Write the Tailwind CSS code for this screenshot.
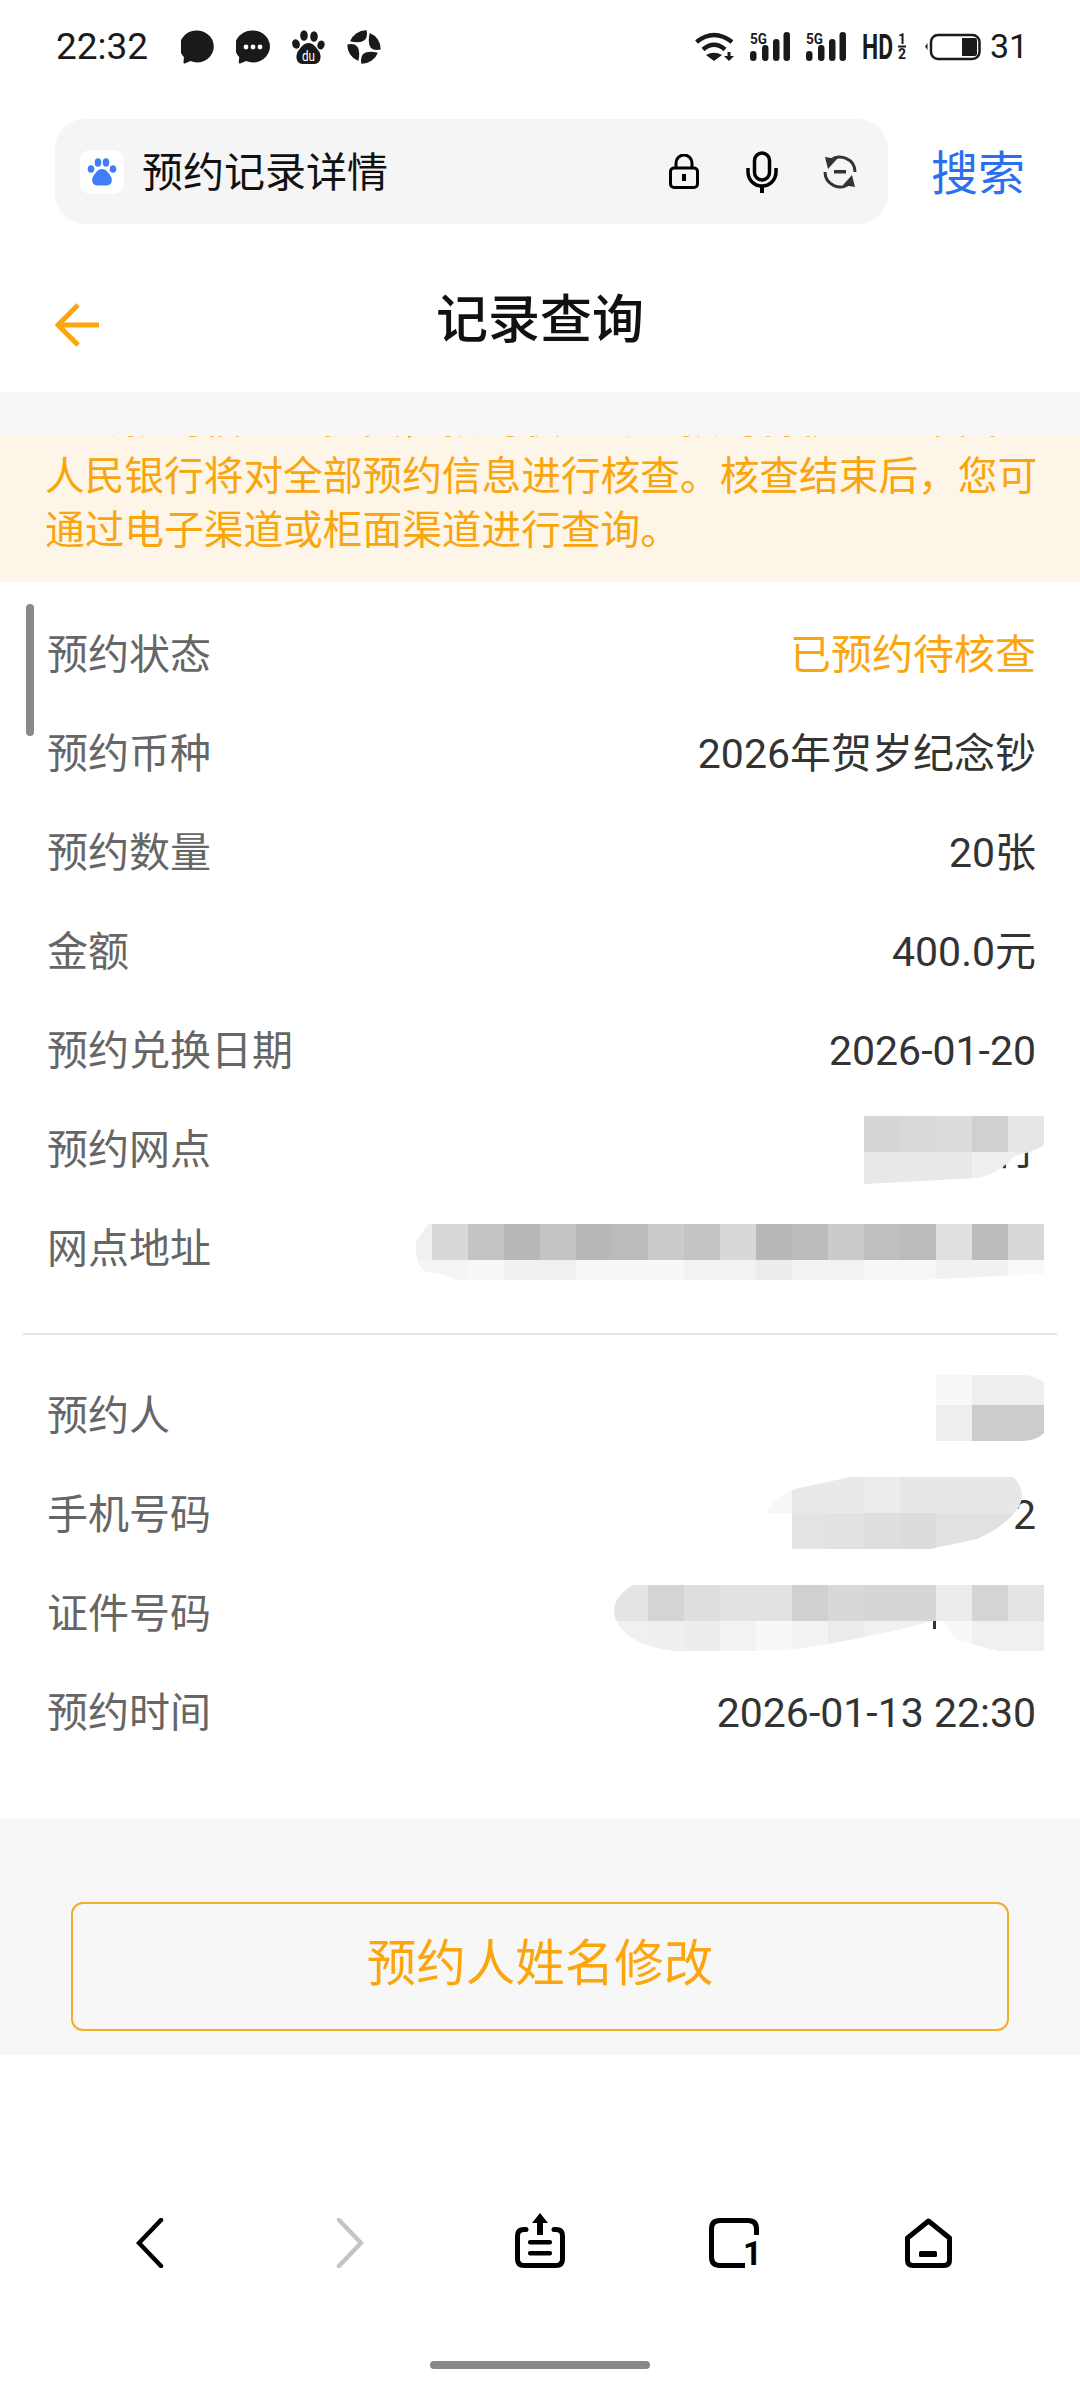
<!DOCTYPE html>
<html lang="zh-CN">
<head>
  <meta charset="UTF-8">
  <title>记录查询</title>
  <script src="https://cdn.jsdelivr.net/npm/@tailwindcss/browser@4"></script>
</head>
<body class="bg-white font-['Roboto','Noto_Sans_CJK_SC',sans-serif]">
<div class="relative w-[1080px] h-[2400px] flex flex-col overflow-hidden bg-white">

  <!-- Status bar -->
  <div class="h-[92px] pt-[30px] flex justify-between items-start pl-[56px] pr-[57px] text-[#1a1a1a]">
    <div class="flex items-center h-[33px]">
      <span class="text-[37px] leading-[33px] w-[92px]">22:32</span>
      <div class="ml-[33px] flex gap-[22px] items-center">
        <svg width="33" height="34" viewBox="0 0 33 34"><path d="M16.500 0.500a16.500 16 0 1 1-7 30.600l-5.600 2.400q-1.500.4-1.400-1.200l.4-5.200A16.500 16 0 0 1 16.500.5z" fill="#1a1a1a"/></svg>
        <svg width="34" height="34" viewBox="0 0 34 34"><path d="M17 0.500a17 16 0 1 1-7 30.600l-5.800 2.400q-1.500.4-1.400-1.200l.4-5.200A17 16 0 0 1 17 .5z" fill="#1a1a1a"/><circle cx="10" cy="17" r="2.400" fill="#fff"/><circle cx="17" cy="17" r="2.400" fill="#fff"/><circle cx="24" cy="17" r="2.400" fill="#fff"/></svg>
        <svg width="33" height="34" viewBox="0 0 33 34" fill="#1a1a1a" class="overflow-visible"><ellipse cx="4" cy="14" rx="3.800" ry="4.800" transform="rotate(-18 4 14)"/><ellipse cx="12" cy="5.500" rx="3.800" ry="5.300"/><ellipse cx="22" cy="6.500" rx="3.800" ry="5.300"/><ellipse cx="29" cy="15" rx="3.600" ry="4.600" transform="rotate(18 29 15)"/><path d="M16.500 13c5 0 7 4 10 7.500 3 3.500 3.500 13-4 13.500h-12c-7.500-.5-7-10-4-13.500 3-3.500 5-7.500 10-7.500z"/><text x="16.500" y="31" text-anchor="middle" font-size="15" font-family="Roboto" fill="#fff" textLength="13" lengthAdjust="spacingAndGlyphs">du</text></svg>
        <svg width="34" height="34" viewBox="0 0 33 33" fill="#1a1a1a">
          <path d="M3 11A16.500 16.500 0 0 1 19 .3Q22 15 3 11Z"/>
          <path d="M3 11A16.500 16.500 0 0 1 19 .3Q22 15 3 11Z" transform="rotate(90 16.500 16.500)"/>
          <path d="M3 11A16.500 16.500 0 0 1 19 .3Q22 15 3 11Z" transform="rotate(180 16.500 16.500)"/>
          <path d="M3 11A16.500 16.500 0 0 1 19 .3Q22 15 3 11Z" transform="rotate(270 16.500 16.500)"/>
        </svg>
      </div>
    </div>
    <div class="flex items-center h-[33px]">
      <svg width="40" height="30" viewBox="0 0 40 30" class="mr-[15px]"><path d="M1.500 10Q19-4 37 10" stroke="#1a1a1a" stroke-width="4.500" fill="none"/><path d="M8 17.500Q19 8 30 17.500" stroke="#1a1a1a" stroke-width="4.500" fill="none"/><path d="M11 23q8-4.500 16 0l-8 6z" fill="#1a1a1a"/><path d="M32.500 20h3v4h3.500l-5 5-5-5h3.500z" fill="#1a1a1a"/></svg>
      <svg width="40" height="30" viewBox="0 0 40 30" class="mr-[16px] overflow-visible"><text x="0" y="12" font-size="15" font-weight="700" font-family="Roboto" fill="#1a1a1a" textLength="17" lengthAdjust="spacingAndGlyphs">5G</text><rect x="0" y="19" width="6.500" height="10" rx="3.200" fill="#1a1a1a"/><rect x="12" y="13" width="6.500" height="16" rx="3.200" fill="#1a1a1a"/><rect x="23" y="7" width="6.500" height="22" rx="3.200" fill="#1a1a1a"/><rect x="33.500" y="0" width="6.500" height="29" rx="3.200" fill="#1a1a1a"/></svg>
      <svg width="40" height="30" viewBox="0 0 40 30" class="mr-[16px] overflow-visible"><text x="0" y="12" font-size="15" font-weight="700" font-family="Roboto" fill="#1a1a1a" textLength="17" lengthAdjust="spacingAndGlyphs">5G</text><rect x="0" y="19" width="6.500" height="10" rx="3.200" fill="#1a1a1a"/><rect x="12" y="13" width="6.500" height="16" rx="3.200" fill="#1a1a1a"/><rect x="23" y="7" width="6.500" height="22" rx="3.200" fill="#1a1a1a"/><rect x="33.500" y="0" width="6.500" height="29" rx="3.200" fill="#1a1a1a"/></svg>
      <svg width="46" height="30" viewBox="0 0 46 30" class="mr-[17px] overflow-visible"><text x="0" y="27" font-size="35" font-weight="700" font-family="Roboto" fill="#1a1a1a" textLength="31" lengthAdjust="spacingAndGlyphs">HD</text><text x="36" y="12" font-size="14" font-weight="700" font-family="Roboto" fill="#1a1a1a" textLength="8" lengthAdjust="spacingAndGlyphs">1</text><rect x="36" y="13.500" width="8" height="2" fill="#1a1a1a"/><text x="36" y="27" font-size="14" font-weight="700" font-family="Roboto" fill="#1a1a1a" textLength="8" lengthAdjust="spacingAndGlyphs">2</text></svg>
      <svg width="56" height="28" viewBox="0 0 56 28" class="mr-[9px]"><path d="M2.500 10v7L0 13.500z" fill="#1a1a1a"/><rect x="6" y="2" width="48.500" height="24" rx="7" fill="none" stroke="#1a1a1a" stroke-width="2.500"/><path d="M37 5h13q2 0 2 2v14q0 2-2 2H37z" fill="#1a1a1a"/></svg>
      <span class="text-[34px] leading-[33px] w-[33px]">31</span>
    </div>
  </div>

  <!-- Search bar -->
  <div class="h-[132px] pt-[27px] pl-[55px] pr-[55px] flex items-start justify-between">
    <div class="w-[833px] h-[105px] bg-[#f5f5f5] rounded-[30px] flex items-center pl-[25px] pr-[31px]">
      <div class="w-[44px] h-[44px] bg-white rounded-[10px] flex items-center justify-center">
        <svg width="30" height="30" viewBox="0 0 30 30" fill="#3f7ef7"><ellipse cx="4" cy="12" rx="3.300" ry="3.800"/><ellipse cx="11" cy="5.500" rx="3.300" ry="4.300"/><ellipse cx="19" cy="5.500" rx="3.300" ry="4.300"/><ellipse cx="26" cy="12" rx="3.300" ry="3.800"/><path d="M15 12c4 0 5.500 3 8 6 3 3.500 2.500 10-3 10.500H10C4.500 28 4 21.500 7 18c2.500-3 4-6 8-6z"/></svg>
      </div>
      <span class="ml-[18px] mt-[3px] text-[41px] leading-none text-[#111]">预约记录详情</span>
      <div class="ml-auto flex items-center">
        <svg width="30" height="35" viewBox="0 0 30 35"><path d="M7 15V9a8 8 0 0 1 16 0v6" fill="none" stroke="#000" stroke-width="3"/><rect x="1.500" y="14" width="27" height="19.500" rx="3.500" fill="none" stroke="#000" stroke-width="3"/><rect x="13" y="20" width="4" height="7" fill="#000"/></svg>
        <svg width="32" height="42" viewBox="0 0 32 42" class="ml-[47px]"><rect x="8.500" y="2" width="15" height="27" rx="7.500" fill="none" stroke="#000" stroke-width="3.500"/><path d="M2 17v4a14 14 0 0 0 28 0v-4" fill="none" stroke="#000" stroke-width="3.500"/><rect x="14" y="34" width="4" height="8" fill="#000"/></svg>
        <svg width="34" height="34" viewBox="0 0 34 34" class="ml-[45px]"><path d="M7 6A15 15 0 0 1 32 17M27 28A15 15 0 0 1 2 17" fill="none" stroke="#333" stroke-width="3"/><path d="M2 2l12 2-9 10zM32 32l-12-2 9-10z" fill="#333"/><rect x="11" y="15" width="12" height="3.500" fill="#333"/></svg>
      </div>
    </div>
    <span class="text-[47px] leading-[110px] text-[#2a6fef]">搜索</span>
  </div>

  <!-- Header -->
  <div class="relative h-[168px] flex items-start justify-center">
    <svg width="44" height="44" viewBox="0 0 44 44" class="absolute left-[55px] top-[79px]"><path d="M23 2L3 22l20 20M3 22h41" fill="none" stroke="#fba60f" stroke-width="5"/></svg>
    <span class="mt-[67px] text-[52px] leading-[60px] font-medium text-[#111]">记录查询</span>
  </div>

  <div class="h-[44px] bg-[#f7f7f8]"></div>

  <!-- Notice -->
  <div class="h-[146px] overflow-hidden bg-[#fdf5e8] px-[45px] text-[39.7px] leading-[54px] text-[#f9a50e]">
    <p class="mt-[-43px] h-[57px] w-[1000px]">您的预约信息已提交，预约状态为已预约待核查。中国</p>
    <p class="w-[1000px]">人民银行将对全部预约信息进行核查。核查结束后，您可<br>通过电子渠道或柜面渠道进行查询。</p>
  </div>

  <!-- Details -->
  <div class="relative pt-[22px] h-[1237px] text-[41px] leading-[102px]">
    <div class="absolute left-[26px] top-[22px] w-[8px] h-[132px] rounded-[4px] bg-[#8a8a8a]"></div>

    <div class="flex justify-between pl-[47px] pr-[44px] h-[99px]"><span class="text-[#666]">预约状态</span><span class="text-[#fba60f]">已预约待核查</span></div>
    <div class="flex justify-between pl-[47px] pr-[44px] h-[99px]"><span class="text-[#666]">预约币种</span><span class="text-[#333]">2026年贺岁纪念钞</span></div>
    <div class="flex justify-between pl-[47px] pr-[44px] h-[99px]"><span class="text-[#666]">预约数量</span><span class="text-[#333]">20张</span></div>
    <div class="flex justify-between pl-[47px] pr-[44px] h-[99px]"><span class="text-[#666]">金额</span><span class="text-[#333]">400.0元</span></div>
    <div class="flex justify-between pl-[47px] pr-[44px] h-[99px]"><span class="text-[#666]">预约兑换日期</span><span class="text-[#333]">2026-01-20</span></div>

    <div class="relative flex justify-between pl-[47px] pr-[44px] h-[99px]">
      <span class="text-[#666]">预约网点</span><span class="text-[#333]">行</span>
      <svg width="180" height="68" viewBox="0 0 180 68" class="absolute right-[36px] top-[17px]">
        <clipPath id="c1"><path d="M0 0H180V29Q170 36 150 40Q135 58 114 62L0 68Z"/></clipPath>
        <g clip-path="url(#c1)">
          <rect x="0" y="0" width="36" height="36" fill="#d6d6d6"/><rect x="36" y="0" width="36" height="36" fill="#d9d9d9"/><rect x="72" y="0" width="36" height="36" fill="#dcdcdc"/><rect x="108" y="0" width="36" height="36" fill="#d0d0d0"/><rect x="144" y="0" width="36" height="36" fill="#e6e6e6"/>
          <rect x="0" y="36" width="36" height="32" fill="#e8e8e8"/><rect x="36" y="36" width="36" height="32" fill="#e9e9e9"/><rect x="72" y="36" width="36" height="32" fill="#e8e8e8"/><rect x="108" y="36" width="72" height="32" fill="#efefef"/>
        </g>
      </svg>
    </div>

    <div class="relative flex justify-between pl-[47px] pr-[44px] h-[99px]">
      <span class="text-[#666]">网点地址</span>
      <svg width="628" height="58" viewBox="0 0 628 58" class="absolute right-[36px] top-[26px]">
        <clipPath id="c2"><path d="M12 0H628V50L500 56H40Q30 50 10 48Q-2 40 0 18Z"/></clipPath>
        <g clip-path="url(#c2)">
          <rect x="0" y="0" width="16" height="36" fill="#f0f0f0"/><rect x="16" y="0" width="36" height="36" fill="#d8d8d8"/><rect x="52" y="0" width="36" height="36" fill="#c4c4c4"/><rect x="88" y="0" width="36" height="36" fill="#b8b8b8"/><rect x="124" y="0" width="36" height="36" fill="#c4c4c4"/><rect x="160" y="0" width="36" height="36" fill="#b8b8b8"/><rect x="196" y="0" width="36" height="36" fill="#bbbbbb"/><rect x="232" y="0" width="36" height="36" fill="#cbcbcb"/><rect x="268" y="0" width="36" height="36" fill="#c4c4c4"/><rect x="304" y="0" width="36" height="36" fill="#d8d8d8"/><rect x="340" y="0" width="36" height="36" fill="#b8b8b8"/><rect x="376" y="0" width="36" height="36" fill="#bbbbbb"/><rect x="412" y="0" width="36" height="36" fill="#cbcbcb"/><rect x="448" y="0" width="36" height="36" fill="#bfbfbf"/><rect x="484" y="0" width="36" height="36" fill="#bbbbbb"/><rect x="520" y="0" width="36" height="36" fill="#e0e0e0"/><rect x="556" y="0" width="36" height="36" fill="#bcbcbc"/><rect x="592" y="0" width="36" height="36" fill="#d8d8d8"/>
          <rect x="0" y="36" width="52" height="22" fill="#f5f5f5"/><rect x="52" y="36" width="36" height="22" fill="#f8f8f8"/><rect x="88" y="36" width="72" height="22" fill="#f0f0f0"/><rect x="160" y="36" width="108" height="22" fill="#f8f8f8"/><rect x="268" y="36" width="72" height="22" fill="#f2f2f2"/><rect x="340" y="36" width="36" height="22" fill="#ececec"/><rect x="376" y="36" width="72" height="22" fill="#f2f2f2"/><rect x="448" y="36" width="72" height="22" fill="#f7f7f7"/><rect x="520" y="36" width="72" height="22" fill="#f1f1f1"/><rect x="592" y="36" width="36" height="22" fill="#f9f9f9"/>
        </g>
      </svg>
    </div>

    <div class="mt-[36px] mb-[30px] mx-[23px] h-[2px] bg-[#e4e4e4]"></div>

    <div class="relative flex justify-between pl-[47px] pr-[44px] h-[99px]">
      <span class="text-[#666]">预约人</span>
      <svg width="108" height="66" viewBox="0 0 108 66" class="absolute right-[36px] top-[10px]">
        <clipPath id="c3"><path d="M0 0H85Q100 0 108 8V58Q100 66 85 66H0Z"/></clipPath>
        <g clip-path="url(#c3)"><rect x="0" y="0" width="36" height="30" fill="#f8f8f8"/><rect x="36" y="0" width="72" height="30" fill="#eeeeee"/><rect x="0" y="30" width="36" height="36" fill="#eeeeee"/><rect x="36" y="30" width="72" height="36" fill="#cccccc"/></g>
      </svg>
    </div>

    <div class="relative flex justify-between pl-[47px] pr-[44px] h-[99px]">
      <span class="text-[#666]">手机号码</span><span class="text-[#333]">2</span>
      <svg width="260" height="72" viewBox="0 0 260 72" class="absolute right-[55px] top-[13px]">
        <clipPath id="c4"><path d="M0 36Q10 20 30 12L85 0H248Q262 12 254 30Q240 50 212 62L165 72H27V36Z"/></clipPath>
        <g clip-path="url(#c4)"><rect x="0" y="0" width="27" height="36" fill="#f7f7f7"/><rect x="27" y="0" width="36" height="36" fill="#e8e8e8"/><rect x="63" y="0" width="36" height="36" fill="#e9e9e9"/><rect x="99" y="0" width="36" height="36" fill="#ececec"/><rect x="135" y="0" width="125" height="36" fill="#e7e7e7"/><rect x="27" y="36" width="36" height="36" fill="#e3e3e3"/><rect x="63" y="36" width="36" height="36" fill="#e2e2e2"/><rect x="99" y="36" width="36" height="36" fill="#dedede"/><rect x="135" y="36" width="36" height="36" fill="#dcdcdc"/><rect x="171" y="36" width="89" height="36" fill="#e1e1e1"/></g>
      </svg>
    </div>

    <div class="relative flex justify-between pl-[47px] pr-[44px] h-[99px]">
      <span class="text-[#666]">证件号码</span>
      <svg width="431" height="66" viewBox="0 0 431 66" class="absolute right-[36px] top-[22px]">
        <clipPath id="c5"><path d="M20 0H431V66H385L345 55Q335 48 330 36L320 36Q250 55 170 66H60Q15 60 3 35Q-5 15 20 0Z"/></clipPath>
        <g clip-path="url(#c5)">
          <rect x="0" y="0" width="35" height="36" fill="#e4e4e4"/><rect x="35" y="0" width="36" height="36" fill="#d4d4d4"/><rect x="71" y="0" width="36" height="36" fill="#dedede"/><rect x="107" y="0" width="72" height="36" fill="#e2e2e2"/><rect x="179" y="0" width="36" height="36" fill="#d0d0d0"/><rect x="215" y="0" width="36" height="36" fill="#d8d8d8"/><rect x="251" y="0" width="72" height="36" fill="#d6d6d6"/><rect x="323" y="0" width="36" height="36" fill="#ececec"/><rect x="359" y="0" width="36" height="36" fill="#d4d4d4"/><rect x="395" y="0" width="36" height="36" fill="#e4e4e4"/>
          <rect x="0" y="36" width="35" height="30" fill="#f0f0f0"/><rect x="35" y="36" width="36" height="30" fill="#efefef"/><rect x="71" y="36" width="36" height="30" fill="#ededed"/><rect x="107" y="36" width="36" height="30" fill="#f3f3f3"/><rect x="143" y="36" width="36" height="30" fill="#f8f8f8"/><rect x="179" y="36" width="36" height="30" fill="#f3f3f3"/><rect x="215" y="36" width="36" height="30" fill="#ececec"/><rect x="251" y="36" width="72" height="30" fill="#f1f1f1"/><rect x="323" y="36" width="36" height="30" fill="#f8f8f8"/><rect x="359" y="36" width="72" height="30" fill="#f0f0f0"/>
        </g>
        <rect x="320" y="36" width="3" height="8" fill="#333"/>
      </svg>
    </div>

    <div class="flex justify-between pl-[47px] pr-[44px] h-[99px]"><span class="text-[#666]">预约时间</span><span class="text-[#333]">2026-01-13 22:30</span></div>
  </div>

  <!-- Edit button -->
  <div class="h-[236px] bg-[#f7f7f8] pt-[83px] px-[71px]">
    <div class="h-[129px] pb-[5px] border-2 border-[#f5ac28] rounded-[12px] flex items-center justify-center text-[49.5px] text-[#fba60f]">预约人姓名修改</div>
  </div>

  <!-- Browser nav -->
  <div class="flex-1 relative flex items-end pl-[136px] pb-[132px]">
    <svg width="28" height="50" viewBox="0 0 28 50"><path d="M25 2L3 25l22 23" fill="none" stroke="#000" stroke-width="4.500" stroke-linecap="round"/></svg>
    <svg width="28" height="50" viewBox="0 0 28 50" class="ml-[172px]"><path d="M3 2l22 23L3 48" fill="none" stroke="#c4c4c4" stroke-width="4.500" stroke-linecap="round"/></svg>
    <svg width="50" height="55" viewBox="0 0 50 55" class="ml-[151px]"><path d="M11 16.500H9q-6.500 0-6.500 6.500v23q0 6.500 6.500 6.500h32q6.500 0 6.500-6.500V23q0-6.500-6.500-6.500h-2" fill="none" stroke="#000" stroke-width="5" stroke-linecap="round"/><path d="M25 0l8 10h-5v12h-6V10h-5z" fill="#000"/><rect x="13" y="27" width="24" height="4.500" rx="2" fill="#000"/><rect x="13" y="38" width="24" height="4.500" rx="2" fill="#000"/></svg>
    <svg width="50" height="50" viewBox="0 0 50 50" class="ml-[144px] overflow-visible"><path d="M36 47.500H11q-8.500 0-8.500-8.500V11q0-8.500 8.500-8.500h28q8.500 0 8.500 8.500v6" fill="none" stroke="#000" stroke-width="5"/><text x="53" y="47" text-anchor="end" font-size="33" font-weight="700" font-family="Roboto" fill="#000">1</text></svg>
    <svg width="47" height="50" viewBox="0 0 47 50" class="ml-[146px]"><path d="M23.500 3L2.500 20v22q0 5.500 5.500 5.500h31q5.500 0 5.500-5.500V20z" fill="none" stroke="#000" stroke-width="5" stroke-linejoin="round"/><rect x="14" y="33" width="18" height="6" rx="1.500" fill="#000"/></svg>
    <div class="absolute left-[430px] top-[306px] w-[220px] h-[8px] rounded-[4px] bg-[#888]"></div>
  </div>

</div>
</body>
</html>
